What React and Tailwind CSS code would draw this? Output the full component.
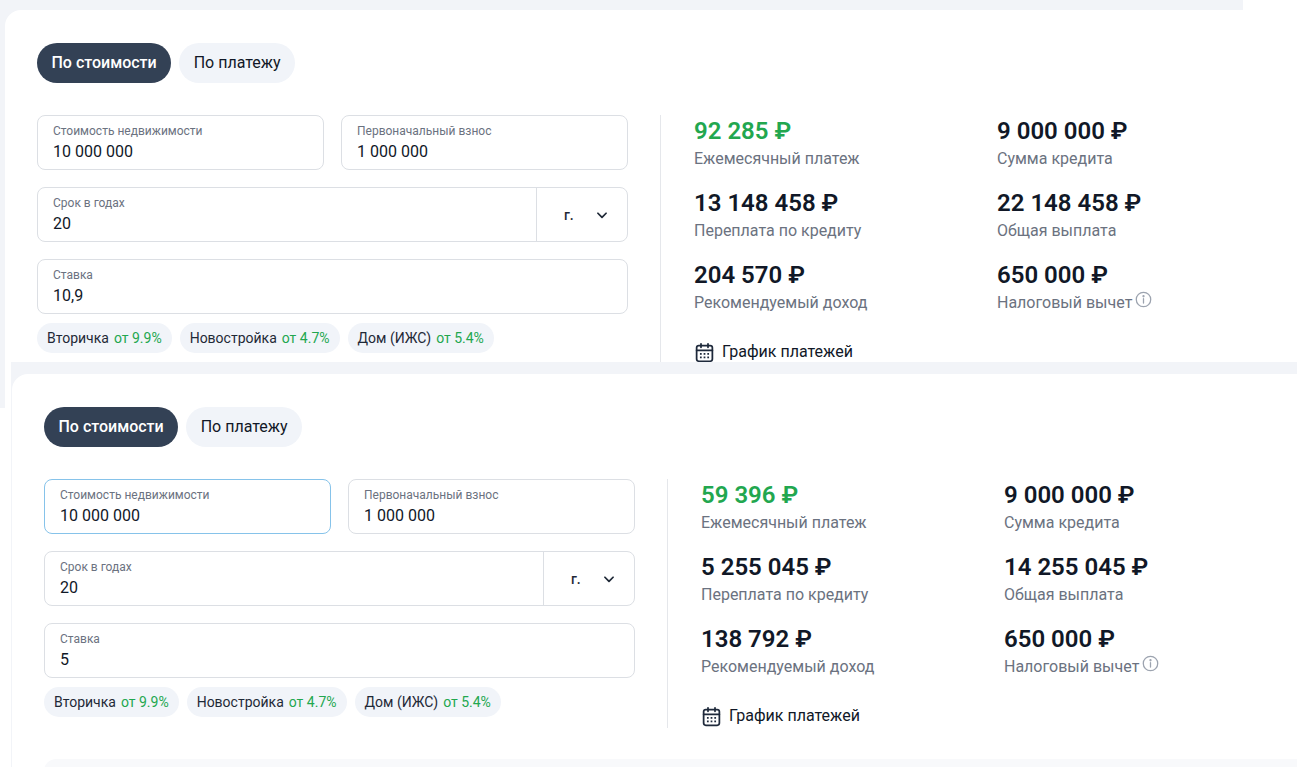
import React from "react";

const FONT = { fontFamily: "Roboto, 'Noto Sans', 'Liberation Sans', sans-serif" };

function Field({ label, value, focused }) {
  return (
    <div
      className={
        "h-[55px] rounded-lg border bg-white px-[15px] pt-[7px] " +
        (focused ? "border-[#86c3ea]" : "border-[#dcdfe4]")
      }
    >
      <div className="text-xs leading-4 text-[#6b7280]">{label}</div>
      <div className="mt-[3px] text-base leading-5 text-[#111827]">{value}</div>
    </div>
  );
}

function Chevron() {
  return (
    <svg width="14" height="14" viewBox="0 0 24 24" fill="none" stroke="#1f2937" strokeWidth="3" strokeLinecap="round" strokeLinejoin="round">
      <path d="M5 9l7 7 7-7" />
    </svg>
  );
}

function CalendarIcon() {
  return (
    <svg width="21" height="21" viewBox="0 0 24 24" fill="none" stroke="#1e293b" strokeWidth="2" strokeLinecap="round" strokeLinejoin="round">
      <rect x="3" y="4" width="18" height="18" rx="2.5" />
      <path d="M8 2v4M16 2v4M3 9.5h18" />
      <g fill="#1e293b" stroke="none">
        <rect x="6.8" y="12.6" width="2" height="2" />
        <rect x="11" y="12.6" width="2" height="2" />
        <rect x="15.2" y="12.6" width="2" height="2" />
        <rect x="6.8" y="16.6" width="2" height="2" />
        <rect x="11" y="16.6" width="2" height="2" />
        <rect x="15.2" y="16.6" width="2" height="2" />
      </g>
    </svg>
  );
}

function InfoIcon() {
  return (
    <svg width="17" height="17" viewBox="0 0 24 24" fill="none" stroke="#9ca3af" strokeWidth="1.8" strokeLinecap="round">
      <circle cx="12" cy="12" r="10.2" />
      <path d="M12 10.8v6.2" />
      <circle cx="12" cy="7.4" r="0.7" fill="#9ca3af" />
    </svg>
  );
}

function Result({ value, label, green, info }) {
  return (
    <div>
      <div className={"text-2xl leading-[32px] font-semibold " + (green ? "text-[#22a74f]" : "text-[#111827]")}>
        {value}
      </div>
      <div className="flex items-start gap-[3px] text-base leading-6 text-[#6b7280]">
        <span>{label}</span>
        {info && (
          <span className="mt-0">
            <InfoIcon />
          </span>
        )}
      </div>
    </div>
  );
}

function Chip({ name, rate }) {
  return (
    <div className="flex h-[30px] items-center rounded-full bg-[#f1f4f9] px-[10px] text-sm text-[#1f2937]">
      {name}
      <span className="ml-[5px] text-[#22a74f]">от {rate}</span>
    </div>
  );
}

function Calculator({ rate, focused, results }) {
  return (
    <div className="min-h-full rounded-tl-2xl bg-white pl-8 pt-[33px]">
      <div className="flex gap-2">
        <div className="flex h-10 items-center rounded-full bg-[#334155] px-[14.5px] text-base font-medium text-white">
          По стоимости
        </div>
        <div className="flex h-10 items-center rounded-full bg-[#f1f4f9] px-[14.5px] text-base text-[#111827]">
          По платежу
        </div>
      </div>
      <div className="mt-8 flex">
        <div className="flex w-[591px] shrink-0 flex-col gap-[17px]">
          <div className="grid grid-cols-2 gap-[17px]">
            <Field label="Стоимость недвижимости" value="10 000 000" focused={focused} />
            <Field label="Первоначальный взнос" value="1 000 000" />
          </div>
          <div className="flex h-[55px] rounded-lg border border-[#dcdfe4] bg-white">
            <div className="flex-1 px-[15px] pt-[7px]">
              <div className="text-xs leading-4 text-[#6b7280]">Срок в годах</div>
              <div className="mt-[3px] text-base leading-5 text-[#111827]">20</div>
            </div>
            <div className="flex w-[91px] items-center border-l border-[#dcdfe4] pl-[27px] gap-[21px]">
              <span className="text-sm font-medium text-[#1f2937]">г.</span>
              <Chevron />
            </div>
          </div>
          <div>
            <Field label="Ставка" value={rate} />
            <div className="mt-[9px] flex gap-2">
              <Chip name="Вторичка" rate="9.9%" />
              <Chip name="Новостройка" rate="4.7%" />
              <Chip name="Дом (ИЖС)" rate="5.4%" />
            </div>
          </div>
        </div>
        <div className="ml-8 shrink-0 border-l border-[#e5e7eb] pl-[33px]">
          <div className="grid grid-cols-[303px_303px] gap-y-[16px]">
            <Result value={results[0]} label="Ежемесячный платеж" green />
            <Result value="9 000 000 ₽" label="Сумма кредита" />
            <Result value={results[1]} label="Переплата по кредиту" />
            <Result value={results[2]} label="Общая выплата" />
            <Result value={results[3]} label="Рекомендуемый доход" />
            <Result value="650 000 ₽" label="Налоговый вычет" info />
          </div>
          <div className="mt-[25px] flex h-6 items-center gap-[7px] text-base text-[#111827]">
            <CalendarIcon />
            <span>График платежей</span>
          </div>
        </div>
      </div>
      <div className="mt-[31px] h-10 rounded-tl-xl bg-[#f8f9fb]" />
    </div>
  );
}

export default function App() {
  return (
    <div className="h-[767px] w-[1297px] overflow-hidden bg-white" style={FONT}>
      <div className="h-[408px] w-[1243px] overflow-hidden bg-[#f2f4f8] pl-[5px] pt-[10px]">
        <div className="w-[1400px]">
          <Calculator
            rate="10,9"
            results={["92 285 ₽", "13 148 458 ₽", "22 148 458 ₽", "204 570 ₽"]}
          />
        </div>
      </div>
      <div className="relative z-10 -mt-[46px] ml-[11px] h-[405px] w-[1286px] overflow-hidden bg-[#f2f4f8] pl-[1px] pt-[12px]">
        <div className="w-[1400px]">
          <Calculator
            rate="5"
            focused
            results={["59 396 ₽", "5 255 045 ₽", "14 255 045 ₽", "138 792 ₽"]}
          />
        </div>
      </div>
    </div>
  );
}
